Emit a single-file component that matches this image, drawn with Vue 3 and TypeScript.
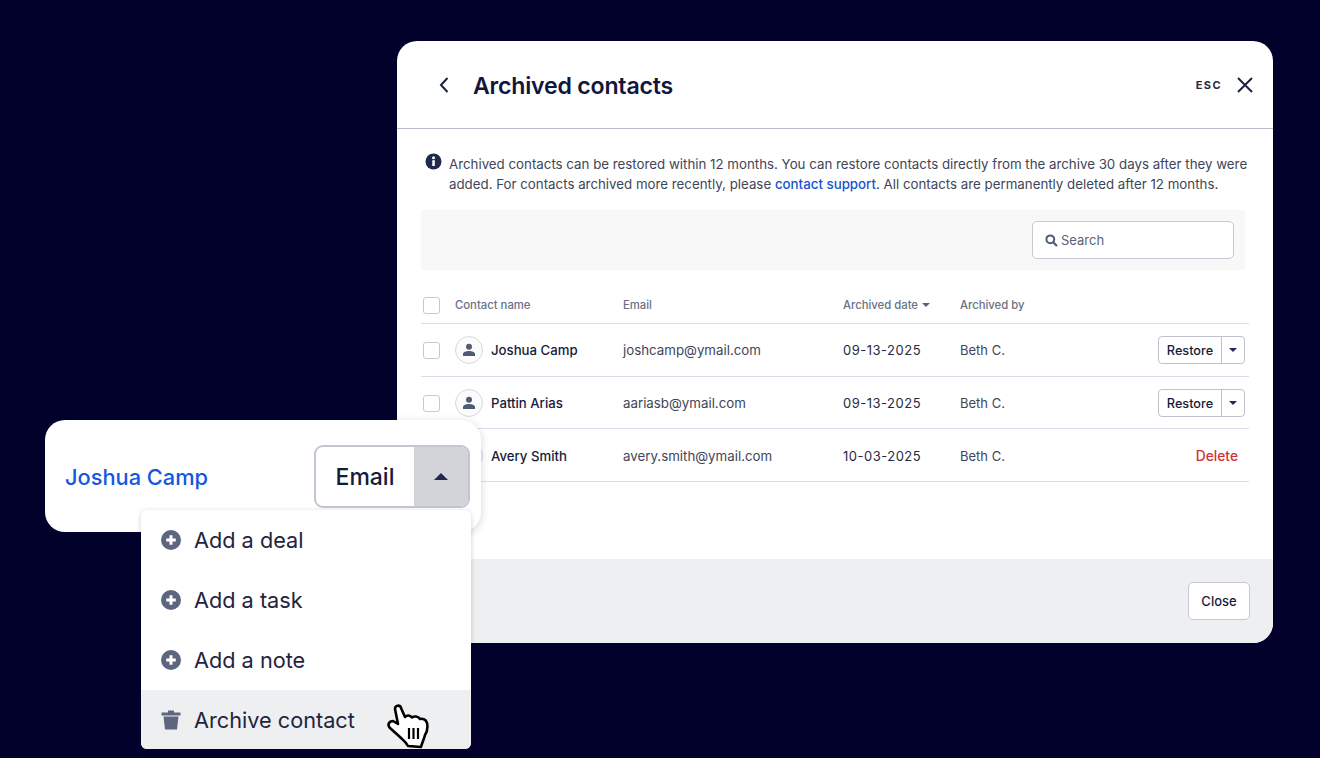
<script setup lang="ts">
interface Row { name: string; email: string; date: string; restore: boolean }
const rows: Row[] = [
  { name: 'Joshua Camp', email: 'joshcamp@ymail.com', date: '09-13-2025', restore: true },
  { name: 'Pattin Arias', email: 'aariasb@ymail.com', date: '09-13-2025', restore: true },
  { name: 'Avery Smith', email: 'avery.smith@ymail.com', date: '10-03-2025', restore: false },
]
const menu = ['Add a deal', 'Add a task', 'Add a note']
</script>

<template>
  <div class="page">
    <section class="modal">
      <header class="head">
        <svg class="back" width="12" height="18" viewBox="0 0 12 18"><path d="M9.5 2 L3 9 L9.5 16" fill="none" stroke="#1c2240" stroke-width="2"/></svg>
        <h1>Archived contacts</h1>
        <span class="esc">ESC</span>
        <svg class="x" width="18" height="18" viewBox="0 0 18 18"><path d="M2 2 L16 16 M16 2 L2 16" stroke="#1c2240" stroke-width="2" fill="none"/></svg>
      </header>
      <div class="body">
        <div class="notice">
          <svg class="info" width="17" height="17" viewBox="0 0 17 17"><circle cx="8.5" cy="8.5" r="8" fill="#1f2a4d"/><rect x="7.3" y="7.2" width="2.5" height="5.8" fill="#fff"/><circle cx="8.5" cy="4.8" r="1.5" fill="#fff"/></svg>
          <p>Archived contacts can be restored within 12 months. You can restore contacts directly from the archive 30 days after they were added. For contacts archived more recently, please <a>contact support</a>. All contacts are permanently deleted after 12 months.</p>
        </div>
        <div class="toolbar">
          <div class="search">
            <svg width="13" height="13" viewBox="0 0 13 13"><circle cx="5.3" cy="5.3" r="3.9" fill="none" stroke="#4f5a74" stroke-width="2"/><path d="M8.2 8.2 L12 12" stroke="#4f5a74" stroke-width="2.2"/></svg>
            <span>Search</span>
          </div>
        </div>
        <div class="table">
          <div class="row th">
            <span class="check"></span>
            <span class="c-name">Contact name</span>
            <span class="c-email">Email</span>
            <span class="c-date">Archived date <i class="sort"></i></span>
            <span class="c-by">Archived by</span>
          </div>
          <div v-for="r in rows" :key="r.name" class="row tr">
            <span class="check"></span>
            <span class="c-name who">
              <span class="avatar">
                <svg width="14" height="14" viewBox="0 0 14 14"><circle cx="7" cy="3.8" r="3" fill="#4f5a74"/><path d="M1 13 V11 C1 9 4 8 7 8 C10 8 13 9 13 11 V13 Z" fill="#4f5a74"/></svg>
              </span>
              <b>{{ r.name }}</b>
            </span>
            <span class="c-email">{{ r.email }}</span>
            <span class="c-date date">{{ r.date }}</span>
            <span class="c-by">Beth C.</span>
            <span class="c-act">
              <span v-if="r.restore" class="split">
                <span class="restore">Restore</span>
                <span class="more"><i class="caret"></i></span>
              </span>
              <span v-else class="delete">Delete</span>
            </span>
          </div>
        </div>
      </div>
      <footer class="foot"><button class="close">Close</button></footer>
    </section>

    <section class="card">
      <span class="contact">Joshua Camp</span>
      <div class="email-btn">
        <span class="email">Email</span>
        <span class="toggle"><i class="up"></i></span>
      </div>
    </section>

    <ul class="menu">
      <li v-for="m in menu" :key="m">
        <svg width="20" height="20" viewBox="0 0 20 20"><circle cx="10" cy="10" r="10" fill="#5c667f"/><path d="M10 5.2 V14.8 M5.2 10 H14.8" stroke="#fff" stroke-width="3"/></svg>
        {{ m }}
      </li>
      <li class="hover">
        <svg width="20" height="20" viewBox="0 0 20 20"><path d="M7 0.5 H13 V2.5 H19.5 V5.5 H0.5 V2.5 H7 Z M2.5 6.5 H17.5 L16 19.5 H4 Z" fill="#5c667f"/></svg>
        Archive contact
      </li>
    </ul>

    <svg class="hand" width="42" height="46" viewBox="0 0 42 46">
      <path d="M8 5 C8 1 13 0.5 14 4 L18 13 C20 11 23 11 25 13.5 C27 12 31 12 33 15 C35 14.5 39 15 40 19 C41 24 40 28 38 31 C37 35 35 39 34 43 L21 42 C19 38 16 36 13 33 L3 24 C0 21 2 17 6 17 L11 20 Z" fill="#fff" stroke="#000" stroke-width="2.6" stroke-linejoin="round"/>
      <path d="M22 24 V35 M26.5 24 V35 M31 24 V35" stroke="#000" stroke-width="2.2"/>
    </svg>
  </div>
</template>

<style>
html, body { margin: 0; padding: 0; background: #02012b; }
</style>

<style scoped>
.page {
  position: relative;
  width: 1320px;
  height: 758px;
  overflow: hidden;
  background: #02012b;
  font-family: "Inter", "Liberation Sans", sans-serif;
  color: #161b3a;
}
.modal {
  position: absolute;
  left: 397px;
  top: 41px;
  width: 876px;
  height: 602px;
  border-radius: 20px;
  background: #fff;
  overflow: hidden;
  display: flex;
  flex-direction: column;
}
.head {
  height: 88px;
  flex: none;
  box-sizing: border-box;
  border-bottom: 1px solid #b9bcc9;
  display: flex;
  align-items: center;
  padding: 0 19px 0 41px;
}
.back { margin-right: 23px; }
h1 {
  margin: 2px 0 0;
  flex: 1;
  font-size: 23.1px;
  font-weight: 600;
  letter-spacing: -0.2px;
  color: #11163a;
}
.esc { font-size: 11px; font-weight: 700; letter-spacing: 1.4px; color: #262b45; margin-right: 14px; margin-top: 1px; }
.body { flex: 1; padding: 25px 24px 0 24px; }
.notice { display: flex; padding-left: 4px; height: 56px; }
.info { margin-right: 7px; margin-top: -1px; flex: none; }
.notice p {
  margin: 0;
  font-size: 13.3px;
  line-height: 20px;
  color: #3f4558;
}
.notice a { color: #1456cf; font-weight: 500; }
.toolbar {
  height: 60px;
  box-sizing: border-box;
  background: #f8f8f9;
  border-radius: 3px;
  width: 824px;
  display: flex;
  align-items: center;
  justify-content: flex-end;
  padding-right: 11px;
}
.search {
  width: 202px;
  height: 38px;
  box-sizing: border-box;
  border: 1.5px solid #c6c9d3;
  border-radius: 5px;
  background: #fff;
  display: flex;
  align-items: center;
  gap: 3px;
  padding-left: 12px;
  font-size: 13px;
  color: #5a6276;
}
.table { margin-top: 8px; width: 828px; }
.row { display: flex; align-items: center; position: relative; box-sizing: border-box; border-bottom: 1px solid #dcdde8; }
.th { height: 46px; padding-top: 9px; font-size: 11.3px; font-weight: 500; color: #6a7086; }
.tr { height: 52.7px; padding-top: 1px; font-size: 13.3px; color: #3f4558; }
.check {
  width: 17px;
  height: 17px;
  box-sizing: border-box;
  border: 1.5px solid #c6c9d3;
  border-radius: 3px;
  margin-left: 2px;
  background: #fff;
  flex: none;
}
.c-name { width: 168px; margin-left: 15px; flex: none; }
.c-email { width: 220px; flex: none; }
.c-date { width: 117px; flex: none; }
.c-by { width: 100px; flex: none; }
.tr .c-by { font-size: 13px; }
.c-act { flex: 1; display: flex; justify-content: flex-end; padding-right: 4px; }
.who { display: flex; align-items: center; gap: 8px; }
.who b { font-weight: 500; color: #161b3a; font-size: 13.2px; }
.date { color: #252a45; font-size: 13px; letter-spacing: 0.5px; }
.avatar {
  width: 28px;
  height: 28px;
  box-sizing: border-box;
  border-radius: 50%;
  border: 1px solid #d6d8e0;
  background: #fbfbfc;
  display: flex;
  align-items: center;
  justify-content: center;
}
.sort { display: inline-block; width: 0; height: 0; border: 4px solid transparent; border-top-color: #5c6278; border-bottom: 0; vertical-align: 2px; margin-left: 1px; }
.split {
  display: flex;
  height: 28px;
  width: 87px;
  box-sizing: border-box;
  border: 1px solid #bfc2cd;
  border-radius: 4px;
  font-size: 12.7px;
  font-weight: 500;
  color: #161b3a;
}
.restore { flex: 1; display: flex; align-items: center; justify-content: center; border-right: 1px solid #bfc2cd; }
.more { width: 22px; display: flex; align-items: center; justify-content: center; }
.caret { width: 0; height: 0; border: 4px solid transparent; border-top-color: #1f2a4d; border-bottom: 0; }
.delete { color: #cc3338; font-weight: 500; font-size: 13.8px; padding-right: 7px; }
.foot {
  height: 84px;
  flex: none;
  background: #eeeff1;
  display: flex;
  align-items: center;
  justify-content: flex-end;
  padding-right: 23px;
}
.close {
  width: 62px;
  height: 38px;
  box-sizing: border-box;
  border: 1.5px solid #c6c9d3;
  border-radius: 5px;
  background: #fff;
  font: 500 13px "Inter", sans-serif;
  color: #161b3a;
}
.card {
  position: absolute;
  left: 45px;
  top: 420px;
  width: 436px;
  height: 112px;
  box-sizing: border-box;
  border-radius: 20px;
  background: #fff;
  box-shadow: 0 2px 8px rgba(20, 25, 60, 0.18);
  display: flex;
  align-items: center;
  justify-content: space-between;
  padding: 0 11px 0 20px;
}
.contact { font-size: 21.8px; font-weight: 500; color: #1456e0; margin-top: 2px; }
.email-btn {
  width: 156px;
  height: 63px;
  box-sizing: border-box;
  border: 2px solid #c3c6d0;
  border-radius: 9px;
  display: flex;
  overflow: hidden;
}
.email { flex: 1; display: flex; align-items: center; justify-content: center; font-size: 23px; font-weight: 500; color: #161b3a; padding-top: 2px; }
.toggle { width: 54px; background: #d2d4da; display: flex; align-items: center; justify-content: center; }
.up { width: 0; height: 0; border: 7px solid transparent; border-bottom-color: #1f2a4d; border-top: 0; }
.menu {
  position: absolute;
  left: 141px;
  top: 510px;
  width: 330px;
  height: 239px;
  margin: 0;
  padding: 0;
  list-style: none;
  background: #fff;
  border-radius: 6px;
  overflow: hidden;
  box-shadow: 0 1px 5px rgba(20, 25, 60, 0.2);
}
.menu li {
  height: 60px;
  display: flex;
  align-items: center;
  gap: 13px;
  padding-left: 20px;
  font-size: 21.7px;
  color: #1f2440;
}
.menu .hover { background: #eeeff1; }
.hand { position: absolute; left: 387px; top: 704px; }
</style>
